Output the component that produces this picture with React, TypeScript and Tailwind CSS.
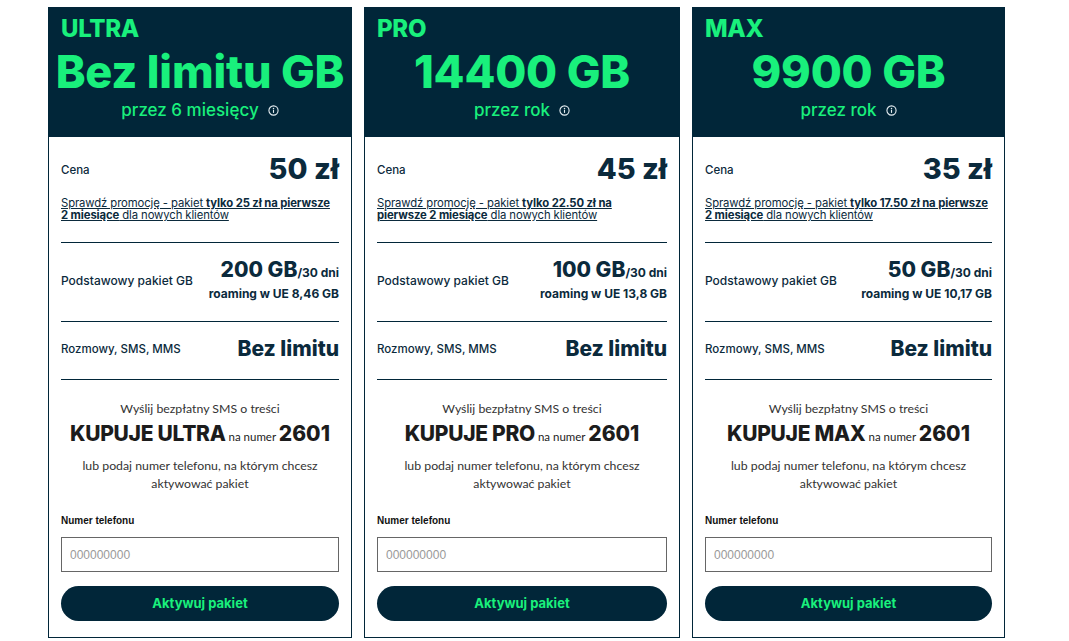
import type { ReactNode } from "react";

type Plan = {
  name: string;
  amount: string;
  period: string;
  price: string;
  promo: ReactNode;
  gb: string;
  roaming: string;
  width: string;
};

const InfoIcon = () => (
  <svg width="11" height="11" viewBox="0 0 12 12" fill="none" className="text-[#e6eef2]">
    <circle cx="6" cy="6" r="5" stroke="currentColor" strokeWidth="1.2" />
    <circle cx="6" cy="3.8" r="0.8" fill="currentColor" />
    <rect x="5.4" y="5.2" width="1.2" height="3.4" fill="currentColor" />
  </svg>
);

const plans: Plan[] = [
  {
    name: "ULTRA",
    amount: "Bez limitu GB",
    period: "przez 6 miesięcy",
    price: "50 zł",
    promo: (
      <>
        Sprawdź promocję - pakiet <b className="font-bold">tylko 25 zł na pierwsze</b>
        <br />
        <b className="font-bold">2 miesiące</b> dla nowych klientów
      </>
    ),
    gb: "200 GB",
    roaming: "roaming w UE 8,46 GB",
    width: "w-[304px]",
  },
  {
    name: "PRO",
    amount: "14400 GB",
    period: "przez rok",
    price: "45 zł",
    promo: (
      <>
        Sprawdź promocję - pakiet <b className="font-bold">tylko 22.50 zł na</b>
        <br />
        <b className="font-bold">pierwsze 2 miesiące</b> dla nowych klientów
      </>
    ),
    gb: "100 GB",
    roaming: "roaming w UE 13,8 GB",
    width: "w-[316px]",
  },
  {
    name: "MAX",
    amount: "9900 GB",
    period: "przez rok",
    price: "35 zł",
    promo: (
      <>
        Sprawdź promocję - pakiet <b className="font-bold">tylko 17.50 zł na pierwsze</b>
        <br />
        <b className="font-bold">2 miesiące</b> dla nowych klientów
      </>
    ),
    gb: "50 GB",
    roaming: "roaming w UE 10,17 GB",
    width: "w-[313px]",
  },
];

const Divider = () => <div className="h-px bg-[#012639]" />;

const PlanCard = ({ plan }: { plan: Plan }) => (
  <div className={`${plan.width} shrink-0 border border-[#012639] bg-white flex flex-col`}>
    {/* header */}
    <div className="h-[129px] bg-[#012639] px-3 pt-[9px] text-[#19f07c] font-['Inter',sans-serif]">
      <div className="text-[24px] leading-[24px] font-extrabold tracking-[-0.3px]">{plan.name}</div>
      <div className="-mx-3 mt-[9px] text-center text-[45px] leading-[44px] font-extrabold tracking-[-0.2px] whitespace-nowrap">
        {plan.amount}
      </div>
      <div className="mt-[6px] flex items-center justify-center gap-[9px] text-[17px] leading-[20px] font-medium">
        <span>{plan.period}</span>
        <InfoIcon />
      </div>
    </div>

    {/* body */}
    <div className="px-3 text-[#0b2a3c] font-['Inter',sans-serif]">
      <div className="pt-[16px] flex items-center justify-between">
        <span className="text-[11.5px] font-medium pt-[3px]">Cena</span>
        <span className="text-[29px] leading-[32px] font-extrabold">{plan.price}</span>
      </div>
      <p className="mt-[12px] text-[11.3px] leading-[12px] underline underline-offset-1 whitespace-nowrap tracking-[-0.1px]">
        {plan.promo}
      </p>
      <div className="mt-[21px]">
        <Divider />
      </div>

      <div className="pt-[15px] pb-[19px] flex items-center justify-between">
        <span className="text-[12px] font-medium pt-px">Podstawowy pakiet GB</span>
        <div className="text-right">
          <div className="leading-[24px]">
            <span className="text-[21px] font-extrabold">{plan.gb}</span>
            <span className="text-[12px] font-bold">/30 dni</span>
          </div>
          <div className="mt-px text-[12px] leading-[16px] font-bold">{plan.roaming}</div>
        </div>
      </div>
      <Divider />

      <div className="pt-[15px] pb-[18px] flex items-center justify-between">
        <span className="text-[11.5px] font-medium pt-px">Rozmowy, SMS, MMS</span>
        <span className="text-[21px] leading-[24px] font-extrabold">Bez limitu</span>
      </div>
      <Divider />

      <div className="pt-[21px] text-center text-[#333] font-['Lato',sans-serif]">
        <div className="text-[12.3px] leading-[16px]">Wyślij bezpłatny SMS o treści</div>
        <div className="mt-1 leading-[26px] text-[#1c1c1c] whitespace-nowrap">
          <span className="text-[21px] font-extrabold font-['Inter',sans-serif] tracking-[-0.3px]">
            KUPUJE {plan.name}
          </span>
          <span className="text-[11.5px]"> na numer </span>
          <span className="text-[21px] font-extrabold font-['Inter',sans-serif]">2601</span>
        </div>
        <p className="mt-[7px] text-[12.3px] leading-[18px] whitespace-nowrap">
          lub podaj numer telefonu, na którym chcesz
          <br />
          aktywować pakiet
        </p>
      </div>

      <label className="mt-[21px] block text-[10px] leading-[14px] font-bold text-[#111] font-['Liberation_Sans',sans-serif]">
        Numer telefonu
      </label>
      <input
        className="mt-[9px] block w-full h-[35px] border border-[#666] px-2 text-[12px] text-[#333] placeholder:text-[#999] outline-none font-['Liberation_Sans',sans-serif]"
        placeholder="000000000"
      />
      <button className="mt-[14px] mb-4 w-full h-[35px] rounded-full bg-[#012639] text-[#19f07c] text-[13px] font-bold font-['Inter',sans-serif]">
        Aktywuj pakiet
      </button>
    </div>
  </div>
);

export default function App() {
  return (
    <div className="min-h-screen bg-white pl-12 pt-[7px] flex gap-3 items-start">
      {plans.map((p) => (
        <PlanCard key={p.name} plan={p} />
      ))}
    </div>
  );
}
